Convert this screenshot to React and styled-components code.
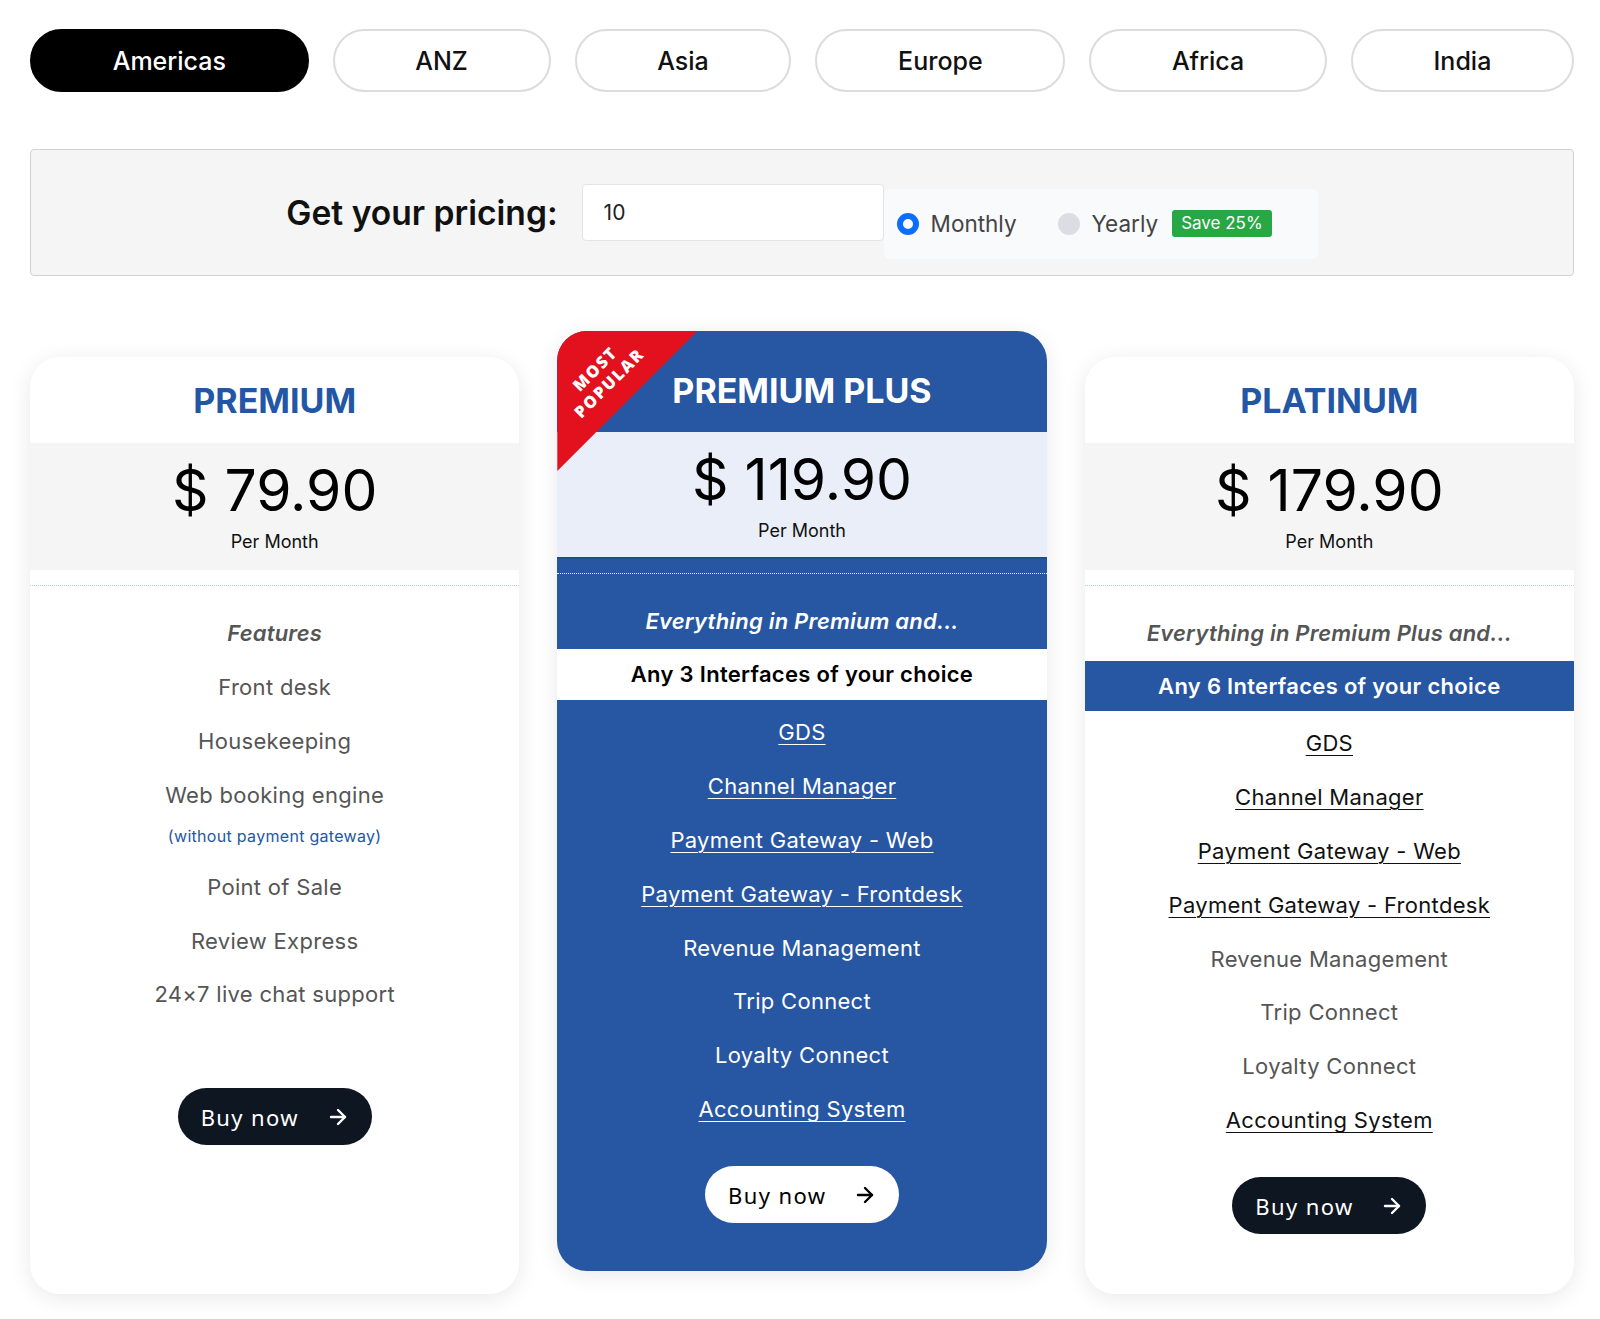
import React from "react";
import styled, { createGlobalStyle, css } from "styled-components";
import { ArrowRight } from "lucide-react";

const Global = createGlobalStyle`
  html, body { margin: 0; padding: 0; background: #fff; }
  body { font-family: Inter, "Noto Sans", "Liberation Sans", sans-serif; color: #111; }
  * { box-sizing: border-box; }
`;

const BLUE = "#2756a2";

const Page = styled.div`
  width: 1600px;
  padding: 29px 26px 27px 30px;
`;

const Tabs = styled.div`
  display: flex;
  justify-content: space-between;
  gap: 24px;
`;

const Tab = styled.button`
  flex: 1 1 auto;
  height: 63px;
  padding: 0 20px;
  border-radius: 32px;
  border: 2px solid ${(p) => (p.$active ? "#000" : "#dcdcdc")};
  background: ${(p) => (p.$active ? "#000" : "#fff")};
  color: ${(p) => (p.$active ? "#fff" : "#111")};
  font-family: Inter, sans-serif;
  font-size: 25px;
  font-weight: 500;
  cursor: pointer;
`;

const PricingBar = styled.div`
  margin-top: 57px;
  height: 127px;
  background: #f5f5f5;
  border: 1px solid #d2d2d2;
  border-radius: 4px;
  display: flex;
  align-items: center;
  justify-content: center;
`;

const PricingLabel = styled.div`
  font-size: 33.6px;
  font-weight: 600;
  color: #111;
  margin-right: 24px;
`;

const Qty = styled.div`
  width: 302px;
  height: 57px;
  background: #fff;
  border: 1px solid #e4e4e4;
  border-radius: 4px;
  display: flex;
  align-items: center;
  padding-left: 21px;
  font-size: 21px;
  color: #222;
`;

const PeriodGroup = styled.div`
  margin-top: 22px;
  height: 70px;
  background: #f9fafb;
  border-radius: 6px;
  display: flex;
  align-items: center;
  padding: 0 46px 0 13px;
`;

const Radio = styled.span`
  width: 22px;
  height: 22px;
  border-radius: 50%;
  flex: none;
  ${(p) =>
    p.$checked
      ? css`
          border: 6px solid #0d6efd;
          background: #fff;
        `
      : css`
          background: #dcdde3;
        `}
`;

const RadioLabel = styled.span`
  font-size: 22.5px;
  color: #444;
  margin-left: 12px;
  margin-right: ${(p) => p.$gap || 0}px;
`;

const SaveBadge = styled.span`
  margin-left: 14px;
  background: #28a745;
  color: #fff;
  font-size: 17px;
  padding: 3px 9px;
  border-radius: 3px;
  line-height: 21px;
`;

const Cards = styled.div`
  margin-top: 81px;
  display: grid;
  grid-template-columns: repeat(3, 1fr);
  gap: 38px;
`;

const Card = styled.div`
  position: relative;
  background: ${(p) => (p.$featured ? BLUE : "#fff")};
  border-radius: 30px;
  overflow: hidden;
  box-shadow: 0 4px 22px rgba(0, 0, 0, 0.09);
  display: flex;
  flex-direction: column;
  align-items: stretch;
  ${(p) =>
    p.$featured &&
    css`
      align-self: start;
      margin-top: -26px;
    `}
`;

const Ribbon = styled.div`
  position: absolute;
  top: 0;
  left: 0;
  width: 140px;
  height: 140px;
  background: #e3101e;
  clip-path: polygon(0 0, 100% 0, 0 100%);
`;

const RibbonText = styled.div`
  position: absolute;
  left: 45px;
  top: 45px;
  transform: translate(-50%, -50%) rotate(-45deg);
  color: #fff;
  font-family: "Open Sans", sans-serif;
  font-weight: 800;
  font-size: 16.5px;
  letter-spacing: 1.6px;
  line-height: 20px;
  text-align: center;
  white-space: nowrap;
`;

const Header = styled.div`
  padding: ${(p) => (p.$featured ? "40px 0 21px" : "24px 0 22px")};
  text-align: center;
`;

const Title = styled.h2`
  margin: 0;
  font-size: 34px;
  line-height: 40px;
  font-weight: 700;
  color: ${(p) => (p.$featured ? "#fff" : "#2357a5")};
`;

const PriceBlock = styled.div`
  background: ${(p) => (p.$featured ? "#e9eef8" : "#f5f5f5")};
  height: 127px;
  padding-top: 14px;
  text-align: center;
  ${(p) => p.$featured && css`border-bottom: 2px solid #1e4c93;`}
`;

const Price = styled.div`
  font-size: 57px;
  line-height: 68px;
  color: #000;
  font-weight: 400;
`;

const PerMonth = styled.div`
  margin-top: 6px;
  font-size: 18px;
  line-height: 22px;
  color: #111;
`;

const Divider = styled.div`
  margin-top: ${(p) => (p.$featured ? 14 : 15)}px;
  border-top: 1px dotted ${(p) => (p.$featured ? "#e6efff" : "#a9d3ea")};
`;

const List = styled.div`
  padding-top: 21px;
  display: flex;
  flex-direction: column;
  align-items: stretch;
  text-align: center;
`;

const Item = styled.div`
  font-size: 22px;
  line-height: 53.9px;
  letter-spacing: 0.3px;
  color: ${(p) => (p.$featured ? "#fff" : "#555")};
`;

const Lead = styled(Item)`
  font-style: italic;
  font-weight: 600;
  font-size: 22px;
  letter-spacing: 0.2px;
`;

const Note = styled.div`
  font-size: 16px;
  line-height: 26px;
  color: #2357a5;
  margin-bottom: 12px;
  letter-spacing: 0.3px;
`;

const Band = styled.div`
  height: ${(p) => (p.$featured ? 51 : 50)}px;
  margin-bottom: 6px;
  display: flex;
  align-items: center;
  justify-content: center;
  font-size: 22px;
  font-weight: 600;
  letter-spacing: 0.3px;
  background: ${(p) => (p.$featured ? "#fff" : BLUE)};
  color: ${(p) => (p.$featured ? "#000" : "#fff")};
`;

const LinkItem = styled.a`
  display: block;
  font-size: 22px;
  line-height: 53.9px;
  letter-spacing: 0.3px;
  color: ${(p) => (p.$featured ? "#fff" : "#111")};
  text-decoration: underline;
  text-underline-offset: 4px;
  text-decoration-thickness: 1px;
`;

const Footer = styled.div`
  display: flex;
  justify-content: center;
  margin-top: ${(p) => p.$top}px;
  padding-bottom: ${(p) => p.$bottom}px;
`;

const BuyButton = styled.button`
  width: 194px;
  height: 57px;
  border-radius: 29px;
  border: none;
  display: flex;
  align-items: center;
  justify-content: space-between;
  padding: 0 22px 0 23px;
  background: ${(p) => (p.$light ? "#fff" : "#0e1621")};
  color: ${(p) => (p.$light ? "#000" : "#fff")};
  font-family: "Noto Sans", sans-serif;
  font-size: 22px;
  letter-spacing: 1.4px;
  cursor: pointer;
`;

const regions = ["Americas", "ANZ", "Asia", "Europe", "Africa", "India"];

const interfaces = [
  { t: "GDS", link: true },
  { t: "Channel Manager", link: true },
  { t: "Payment Gateway - Web", link: true },
  { t: "Payment Gateway - Frontdesk", link: true },
  { t: "Revenue Management" },
  { t: "Trip Connect" },
  { t: "Loyalty Connect" },
  { t: "Accounting System", link: true },
];

function Buy({ light }) {
  return (
    <BuyButton $light={light}>
      <span>Buy now</span>
      <ArrowRight size={24} strokeWidth={2.4} />
    </BuyButton>
  );
}

function Interfaces({ featured }) {
  return interfaces.map((i) =>
    i.link ? (
      <LinkItem key={i.t} href="#" $featured={featured}>
        {i.t}
      </LinkItem>
    ) : (
      <Item key={i.t} $featured={featured}>
        {i.t}
      </Item>
    )
  );
}

export default function App() {
  return (
    <>
      <Global />
      <Page>
        <Tabs>
          {regions.map((r, i) => (
            <Tab key={r} $active={i === 0}>
              {r}
            </Tab>
          ))}
        </Tabs>

        <PricingBar>
          <PricingLabel>Get your pricing:</PricingLabel>
          <Qty>10</Qty>
          <PeriodGroup>
            <Radio $checked />
            <RadioLabel $gap={41}>Monthly</RadioLabel>
            <Radio />
            <RadioLabel>Yearly</RadioLabel>
            <SaveBadge>Save 25%</SaveBadge>
          </PeriodGroup>
        </PricingBar>

        <Cards>
          <Card>
            <Header>
              <Title>PREMIUM</Title>
            </Header>
            <PriceBlock>
              <Price>$ 79.90</Price>
              <PerMonth>Per Month</PerMonth>
            </PriceBlock>
            <Divider />
            <List>
              <Lead>Features</Lead>
              <Item>Front desk</Item>
              <Item>Housekeeping</Item>
              <Item>Web booking engine</Item>
              <Note>(without payment gateway)</Note>
              <Item>Point of Sale</Item>
              <Item>Review Express</Item>
              <Item>24×7 live chat support</Item>
            </List>
            <Footer $top={66} $bottom={60}>
              <Buy />
            </Footer>
          </Card>

          <Card $featured>
            <Ribbon />
            <RibbonText>
              MOST
              <br />
              POPULAR
            </RibbonText>
            <Header $featured>
              <Title $featured>PREMIUM PLUS</Title>
            </Header>
            <PriceBlock $featured>
              <Price>$ 119.90</Price>
              <PerMonth>Per Month</PerMonth>
            </PriceBlock>
            <Divider $featured />
            <List>
              <Lead $featured>Everything in Premium and...</Lead>
              <Band $featured>Any 3 Interfaces of your choice</Band>
              <Interfaces featured />
            </List>
            <Footer $top={29} $bottom={48}>
              <Buy light />
            </Footer>
          </Card>

          <Card>
            <Header>
              <Title>PLATINUM</Title>
            </Header>
            <PriceBlock>
              <Price>$ 179.90</Price>
              <PerMonth>Per Month</PerMonth>
            </PriceBlock>
            <Divider />
            <List>
              <Lead>Everything in Premium Plus and...</Lead>
              <Band>Any 6 Interfaces of your choice</Band>
              <Interfaces />
            </List>
            <Footer $top={29} $bottom={60}>
              <Buy />
            </Footer>
          </Card>
        </Cards>
      </Page>
    </>
  );
}
